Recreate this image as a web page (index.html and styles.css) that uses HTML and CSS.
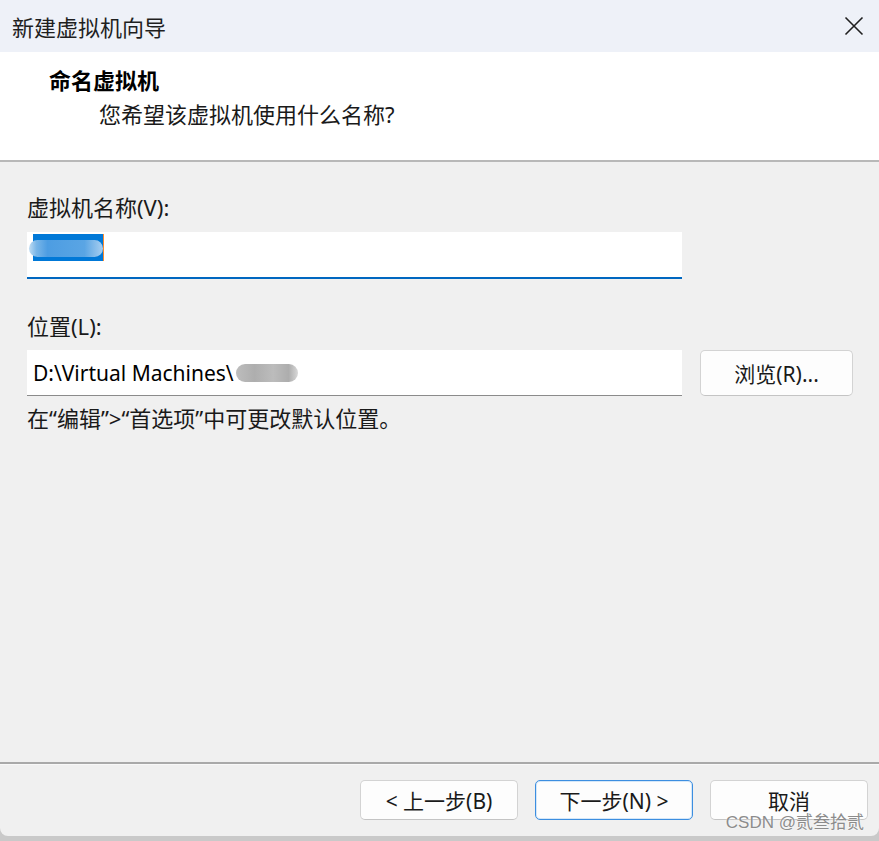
FILE: index.html
```html
<!DOCTYPE html>
<html lang="zh-CN">
<head>
    <meta charset="UTF-8">
    <meta name="viewport" content="width=device-width, initial-scale=1.0">
    <title>新建虚拟机向导</title>
    <link rel="stylesheet" href="styles.css">
</head>
<body>
    <div class="window">
        <div class="titlebar">
            <span class="title">新建虚拟机向导</span>
            <button class="close-button" aria-label="关闭">
                <svg width="20" height="20" viewBox="0 0 20 20">
                    <path d="M1.5 1.5 L18.5 18.5 M18.5 1.5 L1.5 18.5" stroke="#1f1f1f" stroke-width="1.6" fill="none"/>
                </svg>
            </button>
        </div>

        <div class="header">
            <div class="heading">命名虚拟机</div>
            <div class="subheading">您希望该虚拟机使用什么名称?</div>
        </div>

        <div class="content">
            <label class="field-label">虚拟机名称(V):</label>
            <div class="text-input focused">
                <span class="selection"><span class="blur-blue"></span></span>
            </div>

            <label class="field-label second">位置(L):</label>
            <div class="input-row">
                <div class="text-input">
                    <span class="path">D:\Virtual Machines\</span>
                    <span class="blur-gray"></span>
                </div>
                <button class="btn browse">浏览(R)...</button>
            </div>

            <p class="hint">在“编辑”&gt;“首选项”中可更改默认位置。</p>
        </div>

        <div class="footer">
            <button class="btn">&lt; 上一步(B)</button>
            <button class="btn default">下一步(N) &gt;</button>
            <button class="btn">取消</button>
        </div>

        <span class="watermark">CSDN @贰叁拾贰</span>
    </div>
</body>
</html>
```

FILE: styles.css
```css
body {
    margin: 0;
    background-color: #c9c9c9;
    font-family: "Noto Sans", "Noto Sans CJK SC", sans-serif;
    font-size: 22px;
    color: #1a1a1a;
}

.window {
    position: relative;
    height: 836px;
    display: flex;
    flex-direction: column;
    background: #f0f0f0;
    border-radius: 0 0 8px 8px;
    overflow: hidden;
}

.titlebar {
    height: 52px;
    flex-shrink: 0;
    display: flex;
    align-items: center;
    justify-content: space-between;
    background: #eef1f8;
    padding-left: 12px;
}

.title {
    font-size: 22px;
    color: #1f1f1f;
}

.close-button {
    width: 50px;
    height: 52px;
    border: none;
    background: transparent;
    display: flex;
    align-items: center;
    justify-content: center;
    padding: 0;
}

.header {
    height: 110px;
    flex-shrink: 0;
    background: #ffffff;
    border-bottom: 2px solid #b8b8b8;
    padding: 13px 0 0 49px;
    box-sizing: border-box;
}

.heading {
    font-weight: bold;
    color: #000;
    line-height: 30px;
}

.subheading {
    margin-top: 4px;
    padding-left: 50px;
    color: #1a1a1a;
    line-height: 30px;
}

.content {
    flex: 1;
    padding: 30px 0 0 27px;
}

.field-label {
    display: block;
    line-height: 30px;
    margin-bottom: 10px;
}

.field-label.second {
    margin-top: 32px;
    margin-bottom: 9px;
}

.text-input {
    width: 655px;
    height: 46px;
    box-sizing: border-box;
    background: #ffffff;
    border-bottom: 1px solid #8b8b8b;
    display: flex;
    align-items: center;
    padding-left: 6px;
}

.text-input.focused {
    height: 47px;
    border-bottom: 2px solid #0067c0;
}

.selection {
    position: relative;
    width: 70px;
    height: 27px;
    background: #0078d7;
    border-right: 1px solid #ff8a2a;
    margin-top: -14px;
}

.blur-blue {
    position: absolute;
    left: -4px;
    top: 6px;
    width: 74px;
    height: 17px;
    border-radius: 9px;
    background: linear-gradient(90deg, #c0dcf2 0%, #79b6e8 10%, #4d9de2 25%, #5aa5e4 75%, #a9cff0 100%);
}

.path {
    color: #000;
    font-size: 21px;
}

.blur-gray {
    width: 62px;
    height: 18px;
    margin-left: 2px;
    border-radius: 9px;
    background: linear-gradient(90deg, #bdbdbd 0%, #aeaeae 30%, #bcbcbc 60%, #adadad 85%, #d8d8d8 100%);
}

.input-row {
    display: flex;
    align-items: center;
    gap: 18px;
}

.btn {
    width: 158px;
    height: 40px;
    box-sizing: border-box;
    background: #fdfdfd;
    border: 1px solid #d3d3d3;
    border-bottom-color: #c4c4c4;
    border-radius: 5px;
    font-family: inherit;
    font-size: 21px;
    color: #1a1a1a;
    padding: 0;
}

.btn.browse {
    width: 153px;
    height: 46px;
}

.btn.default {
    border: 1px solid #3c8ee0;
    box-shadow: inset 0 0 0 1px #d5e7f8;
}

.hint {
    margin: 7px 0 0;
    line-height: 30px;
}

.footer {
    height: 74px;
    flex-shrink: 0;
    border-top: 2px solid #a9a9a9;
    box-sizing: border-box;
    display: flex;
    justify-content: flex-end;
    gap: 17px;
    padding: 16px 11px 0 0;
    box-shadow: inset 0 1px 0 #f8f8f8;
}

.watermark {
    position: absolute;
    right: 15px;
    bottom: 3px;
    font-family: "Liberation Sans", "Noto Sans CJK SC", sans-serif;
    font-size: 17px;
    color: #8c8c8c;
    text-shadow: 0 0 2px #ffffff;
}
```
